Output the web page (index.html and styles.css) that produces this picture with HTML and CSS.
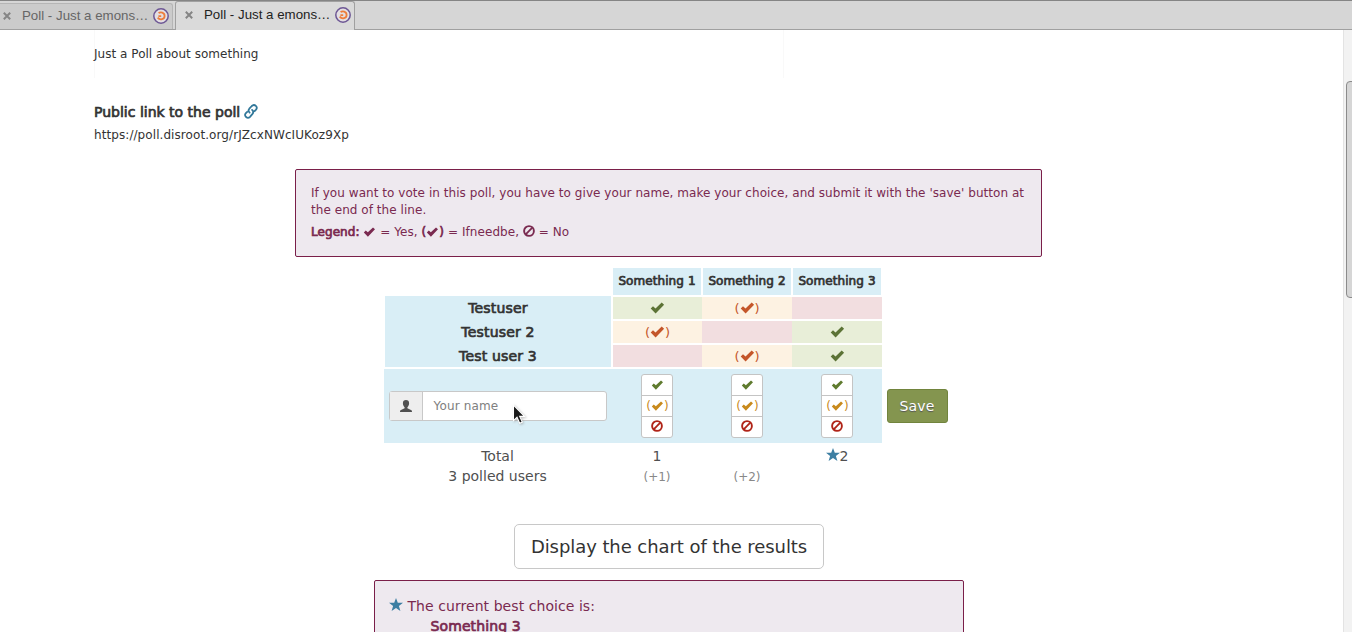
FILE: index.html
```html
<!DOCTYPE html>
<html lang="en">
<head>
<meta charset="utf-8">
<title>Poll - Just a emonstration</title>
<link rel="stylesheet" href="styles.css">
</head>
<body>
<svg class="defs" aria-hidden="true">
  <symbol id="check" viewBox="0 0 14 12"><path d="M0.2 6.6 2.5 4.2 5 6.4 11.2 0.5 13.6 2.8 5.1 11.6Z" fill="currentColor"/></symbol>
  <symbol id="ban" viewBox="0 0 12 12"><circle cx="6" cy="6" r="4.9" fill="none" stroke="currentColor" stroke-width="1.9"/><path d="M2.7 9.3 9.3 2.7" stroke="currentColor" stroke-width="1.8"/></symbol>
  <symbol id="star" viewBox="0 0 14 13"><path d="M7 0 8.8 4.8H14L9.9 7.9 11.4 13 7 9.9 2.6 13 4.1 7.9 0 4.8H5.2Z" fill="currentColor"/></symbol>
  <symbol id="user" viewBox="0 0 12 12"><path d="M6 0C8 0 9.1 1.2 9.1 3.2 9.1 4.9 8.3 6.4 7.4 7.2V8.3L11 9.9C11.8 10.3 12 10.8 12 12H0C0 10.8.2 10.3 1 9.9L4.6 8.3V7.2C3.7 6.4 2.9 4.9 2.9 3.2 2.9 1.2 4 0 6 0Z" fill="currentColor"/></symbol>
  <symbol id="link" viewBox="0 0 14 15"><g fill="none" stroke="currentColor" stroke-width="1.8" stroke-linecap="round"><path d="M5.6 8.6C4.2 7.3 4.4 5.8 5.3 4.7L7.8 2C9 .8 10.7.8 11.8 1.8 13 2.9 12.9 4.5 12 5.6L10.6 7.1"/><path d="M8.1 5.9C9.6 7.2 9.4 8.8 8.5 9.9L6 12.8C4.9 14 3.2 14 2.1 13 .9 11.9.9 10.3 1.9 9.2L3.2 7.8"/></g></symbol>
  <symbol id="logo" viewBox="0 0 16 16"><circle cx="8" cy="8" r="7.2" fill="#e4dfe2" stroke="#6d5795" stroke-width="1.5"/><path d="M5.6 5.2C7.4 3.6 11.6 4.3 11.6 7.9 11.6 11.4 7 12.6 4.7 9.6M5.4 8.1H8.2" fill="none" stroke="#ee7d3b" stroke-width="1.8"/></symbol>
  <symbol id="close" viewBox="0 0 8 8"><path d="M.8.8 7.2 7.2M7.2.8.8 7.2" stroke="currentColor" stroke-width="2"/></symbol>
</svg>

<header class="tabs">
  <div class="tab tab-back"><svg class="i-close"><use href="#close"/></svg><span class="tab-title">Poll - Just a emons…</span><svg class="i-logo"><use href="#logo"/></svg></div>
  <div class="tab tab-active"><svg class="i-close"><use href="#close"/></svg><span class="tab-title">Poll - Just a emons…</span><svg class="i-logo"><use href="#logo"/></svg></div>
</header>

<div class="viewport">
  <main class="page">
    <section class="intro">
      <div class="description">Just a Poll about something</div>
      <h2 class="link-title"><span class="faux">Public link to the poll</span><svg class="i-link"><use href="#link"/></svg></h2>
      <p class="link-url">https://poll.disroot.org/rJZcxNWcIUKoz9Xp</p>
    </section>

    <section class="alert help">
      <p class="help-text">If you want to vote in this poll, you have to give your name, make your choice, and submit it with the 'save' button at<br>the end of the line.</p>
      <p class="legend"><b class="faux">Legend:</b> <svg class="i-check sm"><use href="#check"/></svg> = Yes, <b class="faux">(<svg class="i-check sm"><use href="#check"/></svg>)</b> = Ifneedbe, <svg class="i-ban"><use href="#ban"/></svg> = No</p>
    </section>

    <section class="poll">
      <div class="row head">
        <span></span>
        <div class="th faux">Something 1</div>
        <div class="th faux">Something 2</div>
        <div class="th faux">Something 3</div>
      </div>
      <div class="votes">
        <div class="names faux">
          <div>Testuser</div><div>Testuser 2</div><div>Test user 3</div>
        </div>
        <div class="cells">
          <div class="yes"><svg class="i-check"><use href="#check"/></svg></div>
          <div class="maybe">(<svg class="i-check"><use href="#check"/></svg>)</div>
          <div class="no"></div>
          <div class="maybe">(<svg class="i-check"><use href="#check"/></svg>)</div>
          <div class="no"></div>
          <div class="yes"><svg class="i-check"><use href="#check"/></svg></div>
          <div class="no"></div>
          <div class="maybe">(<svg class="i-check"><use href="#check"/></svg>)</div>
          <div class="yes"><svg class="i-check"><use href="#check"/></svg></div>
        </div>
      </div>
      <div class="entry">
        <div class="form">
          <div class="field">
            <span class="addon"><svg class="i-user"><use href="#user"/></svg></span>
            <span class="input">Your name</span>
            <svg class="cursor" viewBox="0 0 12 19"><path d="M1 1V15L4.2 12 6.6 17.5 9 16.4 6.6 11.2H11Z" fill="#1a1a1a" stroke="#fff" stroke-width="1"/></svg>
          </div>
          <div class="choices"><span class="c-yes"><svg class="i-check sm"><use href="#check"/></svg></span><span class="c-maybe">(<svg class="i-check sm"><use href="#check"/></svg>)</span><span class="c-no"><svg class="i-ban"><use href="#ban"/></svg></span></div>
          <div class="choices"><span class="c-yes"><svg class="i-check sm"><use href="#check"/></svg></span><span class="c-maybe">(<svg class="i-check sm"><use href="#check"/></svg>)</span><span class="c-no"><svg class="i-ban"><use href="#ban"/></svg></span></div>
          <div class="choices"><span class="c-yes"><svg class="i-check sm"><use href="#check"/></svg></span><span class="c-maybe">(<svg class="i-check sm"><use href="#check"/></svg>)</span><span class="c-no"><svg class="i-ban"><use href="#ban"/></svg></span></div>
        </div>
        <button class="save">Save</button>
      </div>
      <div class="row totals">
        <div>Total<br>3 polled users</div>
        <div>1<br><small>(+1)</small></div>
        <div><br><small>(+2)</small></div>
        <div><svg class="i-star"><use href="#star"/></svg>2</div>
      </div>
    </section>

    <button class="chart">Display the chart of the results</button>

    <section class="alert best">
      <p><svg class="i-star"><use href="#star"/></svg><span class="best-title">The current best choice is:</span></p>
      <p class="best-name"><b class="faux">Something 3</b></p>
    </section>
  </main>
  <div class="scroll"><div class="thumb"></div></div>
</div>
</body>
</html>
```
FILE: styles.css
```css
* { box-sizing: border-box; }
body { margin: 0; height: 632px; overflow: hidden; background: #fff; color: #333; font: 12px/17px "DejaVu Sans", sans-serif; }
p, h2 { margin: 0; }
svg { flex: none; }
.defs { display: none; }

.tabs { display: flex; height: 30px; background: #d6d6d6; border-top: 1px solid #858585; border-bottom: 1px solid #a0a0a0; }
.tab { display: flex; align-items: center; font: 13.3px/18px "Liberation Sans", sans-serif; }
.tab-back { width: 173px; height: 26px; margin-top: 2px; padding: 0 3px 2px 3px; background: #cbcbcb; border: solid #b5b5b5; border-width: 1px 1px 0 0; border-radius: 0 3px 0 0; color: #666; }
.tab-active { width: 180px; height: 29px; margin-left: 2px; padding: 0 3px 2px 9px; background: #dadada; border: 1px solid #a0a0a0; border-bottom: 0; border-radius: 3px 3px 0 0; color: #222; }
.tab-title { margin-left: 11px; margin-right: auto; white-space: nowrap; }
.i-close { width: 8px; height: 8px; color: #858585; }
.i-logo { width: 16px; height: 16px; }

.viewport { display: flex; height: 602px; overflow: hidden; }
.page { flex: 1; display: flex; flex-direction: column; align-items: center; padding-right: 6px; }
.page > * { flex: none; }
.scroll { width: 9px; padding: 51px 0 0 2px; overflow: hidden; background: #f2f2f2; border-left: 1px solid #e3e3e3; }
.thumb { width: 12px; height: 217px; background: #d6d6d6; border: 1px solid #8b8b8b; border-radius: 4px; }

.intro { align-self: stretch; padding-left: 94px; height: 139px; }
.description { width: 690px; height: 48px; padding-top: 16px; border-right: 1px solid #f9f9f9; box-shadow: inset 1px 0 #f9f9f9; letter-spacing: .03px; }
.link-title { display: flex; align-items: center; height: 20px; margin-top: 24px; font: 14px/20px "DejaVu Sans", sans-serif; }
.faux { font-weight: 400; -webkit-text-stroke: .7px currentColor; }
.i-link { width: 14px; height: 15px; margin: -2px 0 0 4px; color: #32789a; }
.link-url { margin-top: 5px; letter-spacing: .075px; }

.alert { background: #eee9ef; border: 1px solid #7a1f49; border-radius: 2px; color: #7a2a50; }
.help { width: 747px; height: 88px; padding: 15px; }
.help-text { white-space: nowrap; letter-spacing: .048px; }
.legend { margin-top: 5px; letter-spacing: .06px; }
.legend svg { vertical-align: -1px; }

.i-check { width: 15px; height: 12px; }
.i-check.sm { width: 13px; height: 10px; }
.i-ban { width: 12px; height: 12px; }

.poll { width: 569px; margin: 11px 0 0 -1px; }
.row { display: grid; grid-template-columns: 227px 88px 88px 88px; column-gap: 2px; }
.th { height: 27px; padding: 5px 0 0 1px; background: #d9eef6; text-align: center; white-space: nowrap; letter-spacing: .08px; }
.votes { display: flex; gap: 2px; height: 72px; padding: 1px 0 0 1px; }
.names { width: 226px; padding-left: 1px; background: #d9eef6; text-align: center; font-size: 14px; line-height: 24px; letter-spacing: .18px; }
.cells { display: grid; grid-template-columns: 89px 90px 90px; grid-auto-rows: 22px; gap: 2px 0; padding-top: 1px; font-size: 13px; }
.cells > div { display: flex; align-items: center; justify-content: center; padding-left: 1px; }
.yes { background: #e8eed8; color: #5c7336; }
.maybe { background: #fdf2e2; color: #c4562a; }
.no { background: #f2dee0; }
.entry { display: flex; align-items: center; gap: 5px; margin-top: 2px; }
.form { display: flex; width: 498px; height: 74px; padding: 5px 0 0 5px; background: #d9eef6; }
.form > * { flex: none; }
.field { position: relative; display: flex; width: 218px; height: 30px; margin: 17px 34px 0 0; background: #fff; border: 1px solid #c8c8c8; border-radius: 3px; }
.addon { display: flex; align-items: center; justify-content: center; width: 33px; background: #eee; border-right: 1px solid #c8c8c8; color: #505050; }
.i-user { width: 12px; height: 12px; margin-top: -1px; }
.input { padding: 6px 10px 0 11px; color: #808080; letter-spacing: .15px; }
.cursor { position: absolute; left: 122px; top: 12px; width: 14px; height: 21px; filter: drop-shadow(1px 1px 1px #8888); }
.choices { width: 32px; height: 64px; margin-right: 58px; background: #fff; border: 1px solid #c4c4c4; border-radius: 3px; }
.choices span { display: flex; align-items: center; justify-content: center; height: 21px; padding-left: 2px; }
.choices .c-yes { height: 20px; }
.choices span + span { border-top: 1px solid #c4c4c4; }
.c-yes { color: #5f7b2f; }
.c-maybe { color: #c88a1c; }
.choices .c-no { padding: 0 0 2px; color: #b02418; }
.save { width: 61px; height: 34px; padding: 0; background: #84954f; border: 1px solid #71843d; border-radius: 3px; color: #fff; font: 14px/20px "DejaVu Sans", sans-serif; letter-spacing: .1px; text-shadow: 0 1px 1px #555; }
.totals { height: 44px; padding-top: 3px; text-align: center; color: #505050; font-size: 14px; line-height: 20px; }
.totals > div { padding-left: 1px; }
.totals small { color: #888; font-size: 12px; }
.i-star { width: 14px; height: 13px; color: #3d7fa3; }

.chart { width: 310px; height: 45px; margin-top: 37px; padding: 0 0 0 1px; background: #fff; border: 1px solid #c8c8c8; border-radius: 5px; color: #333; font: 18px/24px "DejaVu Sans", sans-serif; letter-spacing: -.07px; white-space: nowrap; }
.best { width: 590px; height: 90px; margin-top: 11px; padding: 15px 15px 15px 14px; font-size: 14px; line-height: 20px; }
.best-title { margin-left: 5px; letter-spacing: .06px; }
.best-name { padding-left: 42px; letter-spacing: .1px; }
```
